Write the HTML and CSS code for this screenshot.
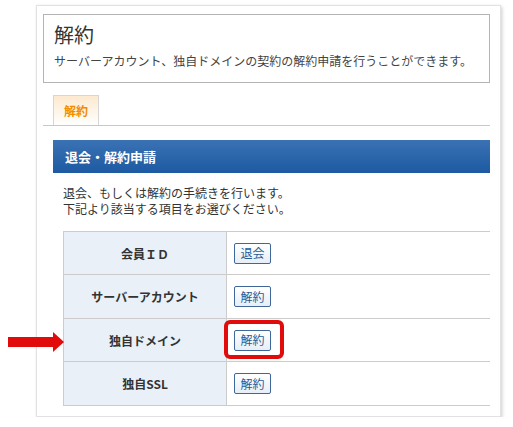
FILE: index.html
```html
<!DOCTYPE html>
<html lang="ja">

<head>
  <meta charset="UTF-8">
  <meta name="viewport" content="width=device-width, initial-scale=1.0">
  <title>解約</title>
  <link rel="stylesheet" href="styles.css">
</head>

<body>
  <div class="panel">
    <div class="page-head">
      <h1>解約</h1>
      <p>サーバーアカウント、独自ドメインの契約の解約申請を行うことができます。</p>
    </div>

    <ul class="tabs">
      <li class="tab active">解約</li>
    </ul>

    <div class="tab-body">
      <h2 class="bar">退会・解約申請</h2>
      <p class="lead">退会、もしくは解約の手続きを行います。<br>下記より該当する項目をお選びください。</p>

      <table class="cancel-table">
        <tr>
          <th>会員ＩＤ</th>
          <td><button type="button">退会</button></td>
        </tr>
        <tr>
          <th>サーバーアカウント</th>
          <td><button type="button">解約</button></td>
        </tr>
        <tr>
          <th>
            <span class="arrow"></span>
            独自ドメイン
          </th>
          <td><span class="mark"><button type="button">解約</button></span></td>
        </tr>
        <tr>
          <th>独自SSL</th>
          <td><button type="button">解約</button></td>
        </tr>
      </table>
    </div>
  </div>
</body>

</html>
```

FILE: styles.css
```css
body {
  background-color: #ffffff;
  color: #333333;
  font-family: "Noto Sans CJK JP", "Noto Sans", sans-serif;
  margin: 0;
}

.panel {
  width: 465px;
  height: 412px;
  box-sizing: border-box;
  margin: 5px 0 0 36px;
  padding: 8px 10px 10px 6px;
  background-color: #ffffff;
  border: 1px solid #e2e2e2;
  box-shadow: 2px 2px 3px rgba(0, 0, 0, 0.12), 0 0 2px rgba(0, 0, 0, 0.08);
}

.page-head {
  border: 1px solid #b4b4b4;
  height: 67px;
  padding: 0 10px;
}

.page-head h1 {
  font-size: 20px;
  font-weight: normal;
  line-height: 26px;
  margin: 7px 0 0;
  color: #333;
}

.page-head p {
  font-size: 12px;
  line-height: 18px;
  margin: 4px 0 0;
  color: #444;
}

.tabs {
  list-style: none;
  margin: 12px 0 0;
  padding: 0 0 0 10px;
  border-bottom: 1px solid #c8c8c8;
  display: flex;
}

.tab {
  width: 44px;
  height: 29px;
  border: 1px solid #d6d6d6;
  border-bottom: none;
  font-size: 12px;
  font-weight: bold;
  line-height: 30px;
  text-align: center;
}

.tab.active {
  color: #f08c00;
  background: linear-gradient(#fde9cf, #ffffff);
}

.tab-body {
  padding: 14px 0 0 10px;
}

.bar {
  margin: 0;
  height: 33px;
  line-height: 33px;
  padding-left: 12px;
  font-size: 13px;
  color: #ffffff;
  background: linear-gradient(#3a72b4, #1d5aa2);
}

.lead {
  font-size: 12px;
  line-height: 16px;
  margin: 12px 0 0 10px;
  color: #333;
}

.cancel-table {
  width: 427px;
  margin: 14px 0 0 10px;
  border-collapse: collapse;
}

.cancel-table th,
.cancel-table td {
  height: 42px;
  border-top: 1px solid #cccccc;
  border-bottom: 1px solid #cccccc;
  padding: 0;
  font-size: 12px;
}

.cancel-table tr:nth-child(even) th,
.cancel-table tr:nth-child(even) td {
  height: 43px;
}

.cancel-table th {
  position: relative;
  width: 162px;
  background-color: #e9f0f8;
  border-left: 1px solid #cccccc;
  border-right: 1px solid #cccccc;
  color: #333;
}

.cancel-table td {
  padding-left: 7px;
}

.cancel-table button {
  font-family: inherit;
  font-size: 12px;
  color: #2a5a95;
  width: 37px;
  height: 21px;
  padding: 0;
  line-height: 18px;
  border: 1px solid #40679a;
  border-radius: 2px;
  background: linear-gradient(#ffffff, #e6eef8);
  vertical-align: middle;
}

.mark {
  position: relative;
  display: inline-block;
}

.mark::after {
  content: "";
  position: absolute;
  left: -10px;
  top: -9px;
  width: 52px;
  height: 31px;
  border: 4px solid #e20b0b;
  border-radius: 6px;
}

.arrow {
  position: absolute;
  left: -56px;
  top: 50%;
  width: 45px;
  height: 10px;
  margin-top: -3px;
  background-color: #e20b0b;
}

.arrow::after {
  content: "";
  position: absolute;
  left: 45px;
  top: -5px;
  border-left: 11px solid #e20b0b;
  border-top: 10px solid transparent;
  border-bottom: 10px solid transparent;
}
```
